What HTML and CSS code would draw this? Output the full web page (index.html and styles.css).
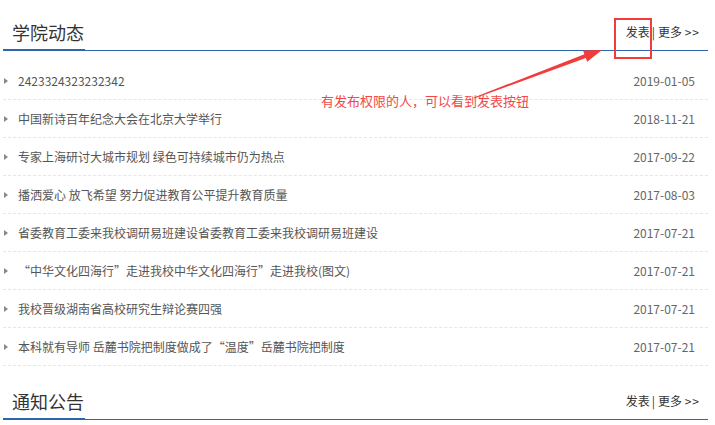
FILE: index.html
```html
<!DOCTYPE html>
<html lang="zh-CN">
  <head>
    <meta charset="UTF-8" />
    <meta name="viewport" content="width=device-width, initial-scale=1.0" />
    <title>学院动态</title>
    <link rel="stylesheet" href="styles.css">
  </head>
  <body>
    <div class="page">
      <div class="section">
        <div class="section-head">
          <h2 class="section-title">学院动态</h2>
          <div class="section-links">
            <a href="#">发表</a><span class="sep">|</span><a href="#">更多 <span class="arr">&gt;&gt;</span></a>
          </div>
        </div>
        <ul class="news">
          <li><a href="#">2423324323232342</a><span class="date">2019-01-05</span></li>
          <li><a href="#">中国新诗百年纪念大会在北京大学举行</a><span class="date">2018-11-21</span></li>
          <li><a href="#">专家上海研讨大城市规划 绿色可持续城市仍为热点</a><span class="date">2017-09-22</span></li>
          <li><a href="#">播洒爱心 放飞希望 努力促进教育公平提升教育质量</a><span class="date">2017-08-03</span></li>
          <li><a href="#">省委教育工委来我校调研易班建设省委教育工委来我校调研易班建设</a><span class="date">2017-07-21</span></li>
          <li><a href="#">“中华文化四海行”走进我校中华文化四海行”走进我校(图文)</a><span class="date">2017-07-21</span></li>
          <li><a href="#">我校晋级湖南省高校研究生辩论赛四强</a><span class="date">2017-07-21</span></li>
          <li><a href="#">本科就有导师 岳麓书院把制度做成了“温度”岳麓书院把制度</a><span class="date">2017-07-21</span></li>
        </ul>
      </div>

      <div class="section second">
        <div class="section-head">
          <h2 class="section-title">通知公告</h2>
          <div class="section-links">
            <a href="#">发表</a><span class="sep">|</span><a href="#">更多 <span class="arr">&gt;&gt;</span></a>
          </div>
        </div>
      </div>

      <!-- annotation over the screenshot -->
      <div class="mark-box"></div>
      <svg class="mark-arrow" width="715" height="425" viewBox="0 0 715 425">
        <polygon points="474.2,98.5 473.8,97.5 584.4,54.3 583.0,50.6 602,50 587.2,61.8 585.8,58.1" fill="#f23b3b" />
      </svg>
      <div class="mark-note">有发布权限的人，可以看到发表按钮</div>
    </div>
  </body>
</html>
```

FILE: styles.css
```css
* {
  margin: 0;
  padding: 0;
  box-sizing: border-box;
}
body {
  background: #fff;
  font-family: "Microsoft YaHei", "Noto Sans CJK SC", "Noto Sans", sans-serif;
  color: #333;
}
a {
  color: inherit;
  text-decoration: none;
}
.page {
  position: relative;
  width: 715px;
  height: 425px;
  padding: 20px 7px 0 3px;
  overflow: hidden;
}
.section-head {
  display: flex;
  justify-content: space-between;
  align-items: flex-end;
  border-bottom: 1px solid #2d64ad;
}
.section-title {
  font-size: 18px;
  font-weight: normal;
  line-height: 24px;
  color: #333;
  padding: 0 1px 5px 9px;
  border-bottom: 2px solid #2d64ad;
  margin-bottom: -1px;
}
.section-links {
  font-size: 12px;
  line-height: 24px;
  color: #333;
  padding: 0 8px 6px 0;
}
.section-links .sep {
  margin: 0 3px 0 2px;
}
.section-links .arr {
  letter-spacing: 1px;
}
.news {
  list-style: none;
  padding-top: 11px;
}
.news li {
  display: flex;
  justify-content: space-between;
  align-items: center;
  height: 38px;
  padding: 0 13px 0 15px;
  border-bottom: 1px dashed #e6e6e6;
  font-size: 12px;
  color: #555;
  position: relative;
}
.news li::before {
  content: "";
  position: absolute;
  left: 1px;
  top: 16px;
  border-left: 4px solid #888;
  border-top: 3px solid transparent;
  border-bottom: 3px solid transparent;
}
.news .date {
  color: #666;
  font-size: 12px;
}
.second {
  margin-top: 23px;
}
.mark-box {
  position: absolute;
  left: 614px;
  top: 18px;
  width: 38px;
  height: 41px;
  border: 2px solid #f23b3b;
}
.mark-arrow {
  position: absolute;
  left: 0;
  top: 0;
  pointer-events: none;
}
.mark-note {
  position: absolute;
  left: 321px;
  top: 92px;
  font-size: 13px;
  line-height: 18px;
  color: #f24848;
}
```
